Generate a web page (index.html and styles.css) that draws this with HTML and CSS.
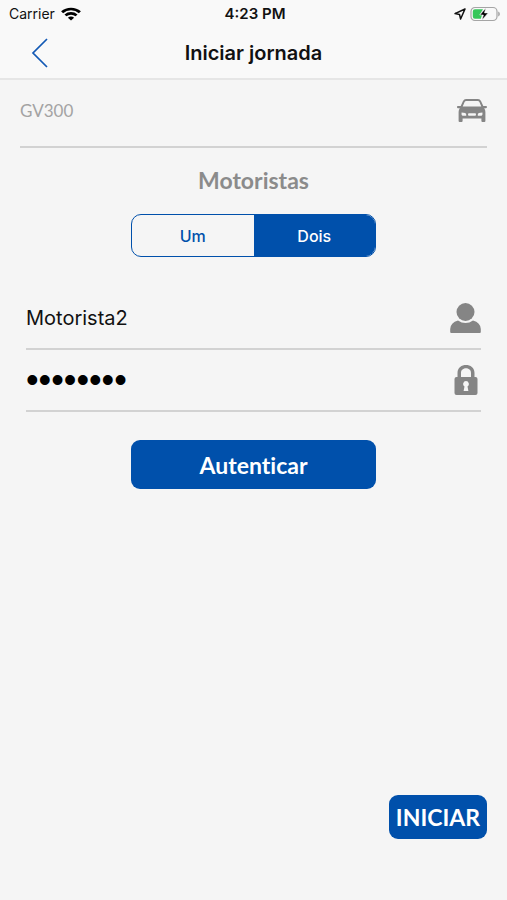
FILE: index.html
```html
<!DOCTYPE html>
<html lang="pt-BR">
<head>
    <meta charset="UTF-8">
    <meta name="viewport" content="width=device-width, initial-scale=1.0">
    <title>Iniciar jornada</title>
    <link rel="stylesheet" href="styles.css">
</head>
<body>
    <header class="header">
        <div class="status-bar">
            <div class="status-bar__left">
                <span>Carrier</span>
                <svg width="20" height="14" viewBox="0 0 18 14" preserveAspectRatio="none" fill="none" stroke="#000" stroke-width="2.6">
                    <path d="M1 5.2C5.4 .9 12.6 .9 17 5.2"/>
                    <path d="M4 8.4C6.9 5.7 11.1 5.7 14 8.4"/>
                    <path d="M6.2 10.7C7.8 9.2 10.2 9.2 11.8 10.7L9 13.5Z" fill="#000" stroke="none"/>
                </svg>
            </div>
            <div class="status-bar__time">4:23 PM</div>
            <div class="status-bar__right">
                <svg width="12" height="12" viewBox="0 0 12 12" fill="none" stroke="#111" stroke-width="1.5" stroke-linejoin="round">
                    <path d="M11 1L1 5.6L5.5 6.4L6.6 11Z"/>
                </svg>
                <svg width="31" height="16" viewBox="0 0 31 16">
                    <rect x="1" y="1.5" width="26" height="13" rx="4" fill="none" stroke="#a5a5a5" stroke-width="1.2"/>
                    <path d="M28.2 5.5C30.4 6.6 30.4 9.4 28.2 10.5Z" fill="#a5a5a5"/>
                    <path d="M5 3.2H13L9.5 9H12L10.8 12.8H5Q2.8 12.8 2.8 10.6V5.4Q2.8 3.2 5 3.2Z" fill="#35c759"/>
                    <path d="M15.8 2L9.8 9H13.4L12 14L18.2 6.9H14.5Z" fill="#000" stroke="#f9f9f9" stroke-width=".6"/>
                </svg>
            </div>
        </div>
        <nav class="nav-bar">
            <a class="nav-bar__back" href="#" aria-label="Voltar">
                <svg width="18" height="30" viewBox="0 0 18 30" fill="none" stroke="#1259b5" stroke-width="1.7">
                    <path d="M16 1L2 15L16 29"/>
                </svg>
            </a>
            <h1 class="nav-bar__title">Iniciar jornada</h1>
        </nav>
    </header>
    <form class="journey">
        <div class="field field--vehicle">
            <input type="text" class="field__input" aria-label="Veículo" placeholder="GV300">
            <svg width="30" height="26" viewBox="1 0 30 26" fill="#858585">
                <path fill-rule="evenodd" d="M10 2H22Q24 2 25 4L27.3 9H30Q31 9 31 10T30 11.2H28.2Q29.4 12.6 29.4 15V24Q29.4 25 28.4 25H26.4Q25.4 25 25.4 24V21.5H6.6V24Q6.6 25 5.6 25H3.6Q2.6 25 2.6 24V15Q2.6 12.6 3.8 11.2H2Q1 11.2 1 10T2 9H4.7L7 4Q8 2 10 2ZM10.2 4Q9.1 4 8.6 5L6.7 9.4H25.3L23.4 5Q22.9 4 21.8 4ZM5.6 15.6Q5.2 18.8 6.8 18.8H10.2Q10.6 16.5 9.2 16.1ZM26.4 15.6L22.8 16.1Q21.4 16.5 21.8 18.8H25.2Q26.8 18.8 26.4 15.6ZM13 16.3Q12 16.3 12 17.5T13 18.8H19Q20 18.8 20 17.5T19 16.3Z"/>
            </svg>
        </div>
        <h2 class="journey__heading" id="drivers">Motoristas</h2>
        <div class="segmented" role="radiogroup" aria-labelledby="drivers">
            <input type="radio" name="drivers" id="drivers-1" value="1">
            <label for="drivers-1">Um</label>
            <input type="radio" name="drivers" id="drivers-2" value="2" checked>
            <label for="drivers-2">Dois</label>
        </div>
        <div class="credentials">
            <div class="field">
                <input type="text" class="field__input" aria-label="Motorista" value="Motorista2">
                <svg width="31" height="32" viewBox="0.5 0 31 32" fill="#858585">
                    <circle cx="16" cy="10" r="9"/>
                    <path d="M8.5 18.5Q12 21 16 21T23.5 18.5Q31 20.5 31.3 27V30Q31.3 31 30.3 31H1.7Q.7 31 .7 30V27Q1 20.5 8.5 18.5Z"/>
                </svg>
            </div>
            <div class="field">
                <input type="password" class="field__input field__input--password" aria-label="Senha" value="senha123" autocomplete="off">
                <svg width="32" height="32" viewBox="-1 0 32 32" fill="#858585">
                    <path fill-rule="evenodd" d="M6.5 13H7.5V9C7.5-1.6 24.5-1.6 24.5 9V13H25.5Q27.5 13 27.5 15V29Q27.5 31 25.5 31H6.5Q4.5 31 4.5 29V15Q4.5 13 6.5 13ZM11 13H21V9C21 2.8 11 2.8 11 9ZM16 17A3 3 0 0 0 14.5 22.5L13.6 27H18.4L17.5 22.5A3 3 0 0 0 16 17Z"/>
                </svg>
            </div>
        </div>
        <button type="button" class="button button--wide">Autenticar</button>
        <button type="submit" class="button button--start">INICIAR</button>
    </form>
</body>
</html>
```
FILE: styles.css
```css
* {
    box-sizing: border-box;
}

body {
    display: flex;
    flex-direction: column;
    min-height: 100vh;
    margin: 0;
    background-color: #f5f5f5;
    font-family: Inter, "Liberation Sans", sans-serif;
    color: #111;
}

svg {
    display: block;
    flex-shrink: 0;
}

.header {
    background-color: #f9f9f9;
    border-bottom: 2px solid #e6e6e6;
}

.status-bar {
    display: grid;
    grid-template-columns: 1fr auto 1fr;
    align-items: center;
    height: 27px;
    padding: 0 6px 0 9px;
    font-size: 14px;
}

.status-bar__left,
.status-bar__right {
    display: flex;
    align-items: center;
    gap: 6px;
}

.status-bar__right {
    justify-content: flex-end;
    gap: 4px;
}

.status-bar__time {
    font-size: 15px;
    font-weight: 600;
}

.nav-bar {
    display: grid;
    grid-template-columns: 1fr auto 1fr;
    align-items: center;
    height: 51px;
    padding: 0 31px;
}

.nav-bar__title {
    margin: 0;
    font-size: 20px;
    font-weight: 600;
}

.journey {
    display: flex;
    flex: 1;
    flex-direction: column;
    align-items: center;
    padding: 0 20px 61px;
}

.field {
    display: flex;
    align-items: center;
    width: 100%;
    height: 62px;
    border-bottom: 2px solid #d2d2d2;
}

.field--vehicle {
    height: 68px;
    padding-bottom: 6px;
}

.field__input {
    flex: 1;
    min-width: 0;
    padding: 0;
    border: 0;
    outline: 0;
    background: none;
    font-family: inherit;
    font-size: 20px;
    color: #111;
}

.field--vehicle .field__input {
    font-family: Lato, sans-serif;
    font-size: 17px;
}

.field__input::placeholder {
    color: #a3a3a3;
}

.field__input--password {
    font-family: "Liberation Sans", sans-serif;
    font-size: 36px;
    color: #000;
}

.journey__heading {
    margin: 18px 0 20px;
    font-family: Lato, sans-serif;
    font-size: 23px;
    font-weight: 700;
    line-height: 28px;
    color: #8b8b8b;
}

.segmented {
    display: flex;
    width: 52.5%;
    height: 43px;
    overflow: hidden;
    border: 1px solid #0050ab;
    border-radius: 10px;
}

.segmented input {
    position: absolute;
    opacity: 0;
}

.segmented label {
    display: flex;
    flex: 1;
    align-items: center;
    justify-content: center;
    font-size: 16px;
    font-weight: 500;
    color: #0050ab;
    cursor: pointer;
}

.segmented input:checked + label {
    background-color: #0050ab;
    color: #fff;
}

.credentials {
    width: 100%;
    margin: 31px 0 28px;
    padding: 0 6px;
}

.button {
    border: 0;
    border-radius: 9px;
    background-color: #0050ab;
    font-family: Lato, sans-serif;
    font-size: 23px;
    font-weight: 700;
    font-variant-ligatures: none;
    color: #fff;
    cursor: pointer;
}

.button--wide {
    width: 52.5%;
    height: 49px;
}

.button--start {
    align-self: flex-end;
    height: 44px;
    margin-top: auto;
    padding: 0 7px;
}
```
